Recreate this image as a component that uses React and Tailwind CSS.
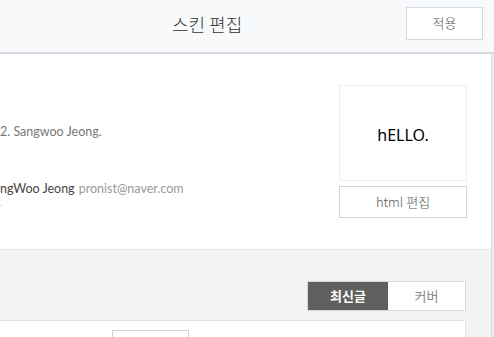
import React from "react";

const kr = "font-['Noto_Sans_CJK_KR','Noto_Sans',sans-serif]";
const lat = "font-['Lato','Noto_Sans_CJK_KR',sans-serif]";

export default function App() {
    return (
        <div className="w-[494px] h-[337px] overflow-hidden bg-white flex flex-col">
            {/* header */}
            <div className="h-[54px] shrink-0 bg-[#f8f9fb] border-b-2 border-[#d3d8de] flex items-center">
                <div className={`pl-[172px] pb-[3px] text-[18px] font-light text-[#333] ${kr}`}>스킨 편집</div>
                <button className={`ml-auto mr-[11px] mb-[6px] w-[77px] h-[33px] bg-white border border-[#d4dae2] text-[13px] font-light text-[#555] ${kr}`}>
                    적용
                </button>
            </div>

            <div className="flex flex-1 min-h-0">
                <div className="flex-1 flex flex-col min-w-0">
                    {/* skin info */}
                    <div className="h-[196px] shrink-0 bg-white border-b border-[#e3e6eb] flex">
                        <div className={`flex-1 flex flex-col text-[12.5px] leading-[16px] ${lat}`}>
                            <div className="mt-[70px] text-[#777]">2. Sangwoo Jeong.</div>
                            <div className="mt-[41px] whitespace-nowrap">
                                <span className="text-[#444]">ngWoo Jeong</span>
                                <span className="ml-[4px] text-[#999]">pronist@naver.com</span>
                            </div>
                            <div className="mt-[2px] text-[8px] leading-[8px] text-[#aaa]">.</div>
                        </div>
                        <div className="w-[128px] mr-[24px] pt-[31px] flex flex-col">
                            <div className="h-[96px] border border-[#eeeeee] flex items-center justify-center">
                                <span className="text-[16px] text-black font-['Noto_Sans',sans-serif] pt-[3px]">hELLO.</span>
                            </div>
                            <button className={`mt-[5px] h-[32px] bg-white border border-[#cdd4dd] text-[13px] font-light text-[#555] ${kr}`}>
                                html 편집
                            </button>
                        </div>
                    </div>

                    {/* list area */}
                    <div className="flex-1 bg-[#f2f3f5] flex flex-col pr-[25px]">
                        <div className="mt-[31px] self-end flex h-[30px] border border-[#d4dae2]">
                            <div className={`w-[80px] bg-[#5f5f5f] text-white text-[13px] font-bold flex items-center justify-center ${kr}`}>최신글</div>
                            <div className={`w-[77px] bg-white text-[#888] text-[13px] flex items-center justify-center ${kr}`}>커버</div>
                        </div>
                        <div className="mt-[9px] flex-1 bg-white border border-[#e1e5ea] border-l-0 pl-[112px] pt-[9px]">
                            <div className="w-[77px] h-[20px] border border-[#ccd4de]" />
                        </div>
                    </div>
                </div>
                <div className="w-[3px] bg-[#eeeeee] border-l border-[#dddddd]" />
            </div>
        </div>
    );
}
